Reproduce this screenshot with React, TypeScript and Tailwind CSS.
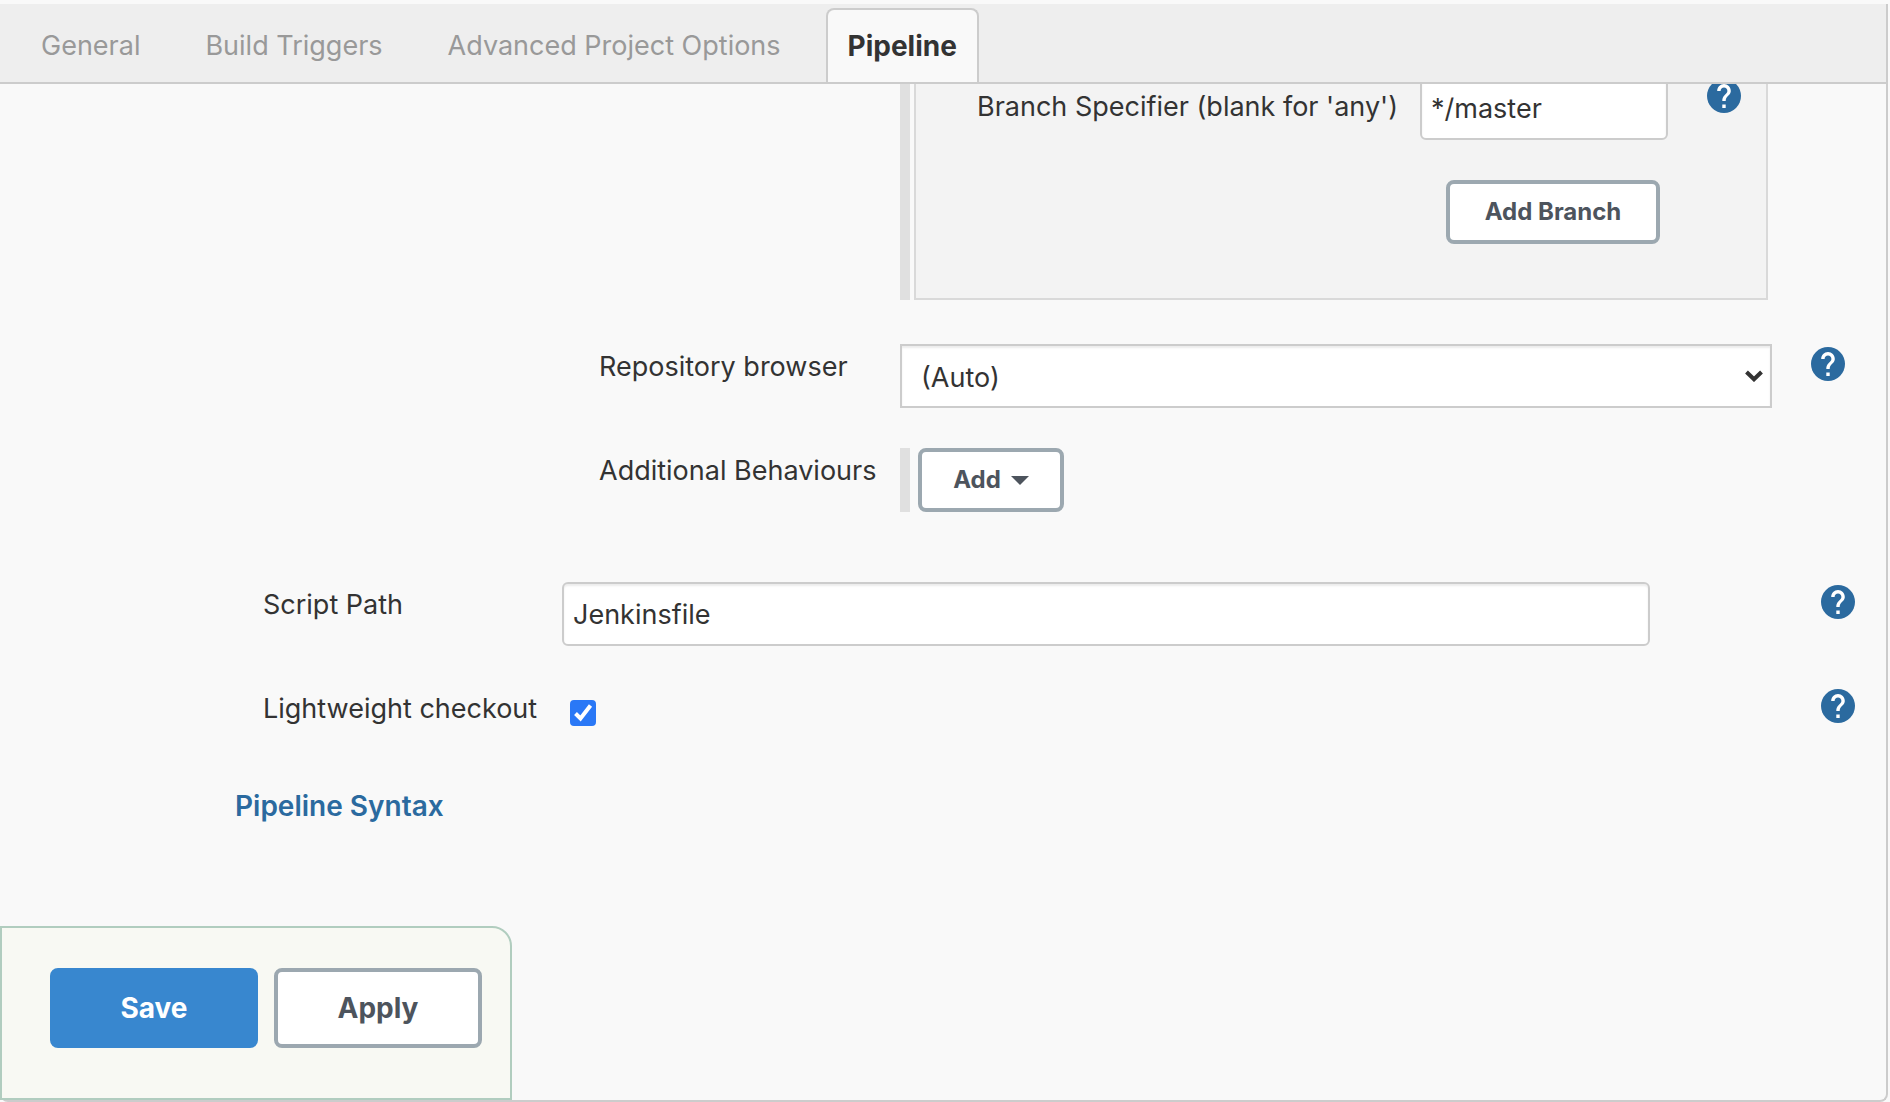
import React from "react";

const buttonBase =
  "flex shrink-0 items-center justify-center rounded-lg font-bold";
const outlined = "border-4 border-[#9ca8b0] bg-white text-[#4d545d]";
const field =
  "h-16 border-2 border-[#cccccc] bg-white text-[#333333] shadow-[inset_0_2px_2px_rgba(0,0,0,0.075)] outline-none";

function HelpButton({ label }: { label: string }) {
  return (
    <button type="button" aria-label={label} className="mt-[3px] size-[34px] shrink-0">
      <svg viewBox="2 2 20 20" className="size-full">
        <circle cx="12" cy="12" r="10" fill="#2b6a9f" />
        <path
          fill="#ffffff"
          d="M13 19h-2v-2h2v2zm2.07-7.75-.9.92C13.45 12.9 13 13.5 13 15h-2v-.5c0-1.1.45-2.1 1.17-2.83l1.24-1.26c.37-.36.59-.86.59-1.41 0-1.1-.9-2-2-2s-2 .9-2 2H8c0-2.210 1.79-4 4-4s4 1.79 4 4c0 .88-.36 1.68-.93 2.25z"
        />
      </svg>
    </button>
  );
}

function Tab({ label }: { label: string }) {
  return (
    <a href="#" className="flex h-full items-center px-8 pt-0.5 text-[#999999]">
      {label}
    </a>
  );
}

export default function App() {
  return (
    <div className="flex min-h-screen flex-col bg-[#f9f9f9] pt-1 pr-0.5 font-['Inter',sans-serif] text-[27px] leading-8 text-[#333333]">
      <div className="flex flex-1 flex-col rounded-b-lg border-r-2 border-b-2 border-[#cccccc]">
        <nav className="flex h-20 gap-px border-b-2 border-[#cccccc] bg-[#eeeeee] pt-1 pl-[9px]">
          <Tab label="General" />
          <Tab label="Build Triggers" />
          <Tab label="Advanced Project Options" />
          <a
            href="#"
            aria-current="page"
            className="ml-3 flex h-full items-center rounded-t-lg border-2 border-b-0 border-[#cccccc] bg-[#f9f9f9] px-5 text-[28px] font-bold"
          >
            Pipeline
          </a>
        </nav>

        <main className="flex flex-1 flex-col overflow-hidden">
          <section className="-mt-2 mr-[118px] ml-[900px] flex h-56 gap-1">
            <div className="w-2.5 bg-[#e0e0e0]" />
            <div className="flex-1 border-2 border-t-0 border-[#d9d9d9] bg-[#f3f3f3] pr-[25px] pl-[61px]">
              <div className="flex">
                <label htmlFor="branch" className="mt-[15px] flex-1 whitespace-nowrap">
                  Branch Specifier (blank for 'any')
                </label>
                <input
                  id="branch"
                  defaultValue="*/master"
                  className={`${field} mr-[39px] w-[248px] rounded-md px-[9px]`}
                />
                <HelpButton label="Help for Branch Specifier" />
              </div>
              <button
                type="button"
                className={`${buttonBase} ${outlined} mt-10 mr-[81px] ml-auto h-16 w-[214px] text-2xl`}
              >
                Add Branch
              </button>
            </div>
          </section>

          <div className="mt-11 mr-[41px] ml-[599px] flex">
            <label htmlFor="browser" className="mt-[7px] w-[301px]">
              Repository browser
            </label>
            <div className="relative mr-[39px] flex-1">
              <select
                id="browser"
                className={`${field} block w-full appearance-none rounded-none px-[19px] pt-1`}
              >
                <option>(Auto)</option>
              </select>
              <svg
                viewBox="0 0 18 12"
                className="pointer-events-none absolute top-[26px] right-[9px] h-3 w-[18px]"
              >
                <path d="M1.5 2 9 9.3 16.5 2" fill="none" stroke="#333333" strokeWidth="4" />
              </svg>
            </div>
            <HelpButton label="Help for Repository browser" />
          </div>

          <div className="mt-10 ml-[599px] flex">
            <span className="mt-[7px] w-[301px]">Additional Behaviours</span>
            <div className="mr-2 w-2.5 bg-[#e0e0e0]" />
            <button
              type="button"
              className={`${buttonBase} ${outlined} h-16 w-[146px] gap-2.5 text-2xl`}
            >
              Add
              <svg viewBox="0 0 18 9" className="h-[9px] w-[18px]">
                <path d="M0 0h18L9 9z" fill="#4d545d" />
              </svg>
            </button>
          </div>

          <div className="mt-[70px] mr-[31px] ml-[263px] flex">
            <label htmlFor="script" className="mt-[7px] w-[299px]">
              Script Path
            </label>
            <input
              id="script"
              defaultValue="Jenkinsfile"
              className={`${field} mr-[171px] flex-1 rounded-md px-[9px]`}
            />
            <HelpButton label="Help for Script Path" />
          </div>

          <div className="mt-10 mr-[31px] ml-[263px] flex items-start">
            <label htmlFor="light" className="mt-[7px] w-[307px]">
              Lightweight checkout
            </label>
            <span className="relative mt-3.5 size-[26px]">
              <input
                id="light"
                type="checkbox"
                defaultChecked
                className="peer block size-[26px] appearance-none rounded border-2 border-[#767676] bg-white checked:border-[#2a78f6] checked:bg-[#2a78f6]"
              />
              <svg
                viewBox="0 0 26 26"
                className="pointer-events-none absolute inset-0 hidden size-[26px] peer-checked:block"
              >
                <path d="M5.5 13.5 10.500 18.500 20.500 5.500" fill="none" stroke="#ffffff" strokeWidth="4" />
              </svg>
            </span>
            <div className="flex-1" />
            <HelpButton label="Help for Lightweight checkout" />
          </div>

          <a
            href="#"
            className="mt-16 ml-[235px] self-start text-[28px] font-semibold text-[#2b6a9f]"
          >
            Pipeline Syntax
          </a>

          <footer className="mt-auto flex h-[174px] w-lg gap-4 rounded-tr-[20px] border-2 border-[#b1cdbf] bg-[#f8f9f3] pt-10 pl-12 text-[28px]">
            <button type="button" className={`${buttonBase} h-20 w-[208px] bg-[#3887cf] text-white`}>
              Save
            </button>
            <button type="button" className={`${buttonBase} ${outlined} h-20 w-[208px]`}>
              Apply
            </button>
          </footer>
        </main>
      </div>
    </div>
  );
}
